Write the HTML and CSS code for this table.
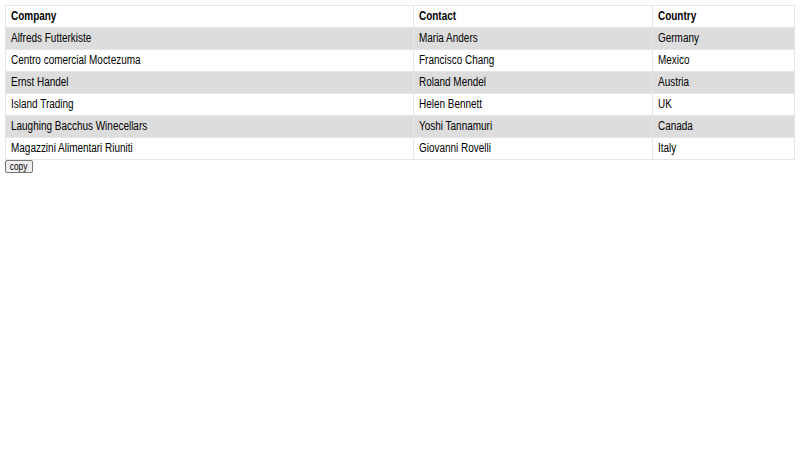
FILE: index.html
```html
<!DOCTYPE html>
<html>
<head>
<meta charset="utf-8">
<link rel="stylesheet" href="styles.css">
</head>
<body>
<table class="data">
  <colgroup><col class="c1"><col class="c2"><col class="c3"></colgroup>
  <tr><th><span>Company</span></th><th><span>Contact</span></th><th><span>Country</span></th></tr>
  <tr><td><span>Alfreds Futterkiste</span></td><td><span>Maria Anders</span></td><td><span>Germany</span></td></tr>
  <tr><td><span>Centro comercial Moctezuma</span></td><td><span>Francisco Chang</span></td><td><span>Mexico</span></td></tr>
  <tr><td><span>Ernst Handel</span></td><td><span>Roland Mendel</span></td><td><span>Austria</span></td></tr>
  <tr><td><span>Island Trading</span></td><td><span>Helen Bennett</span></td><td><span>UK</span></td></tr>
  <tr><td><span>Laughing Bacchus Winecellars</span></td><td><span>Yoshi Tannamuri</span></td><td><span>Canada</span></td></tr>
  <tr><td><span>Magazzini Alimentari Riuniti</span></td><td><span>Giovanni Rovelli</span></td><td><span>Italy</span></td></tr>
</table>
<button class="copy"><span>copy</span></button>
</body>
</html>
```
FILE: styles.css
```css
body {
  margin: 5px;
  font-family: "Liberation Sans", Arial, sans-serif;
  font-size: 12px;
  color: #000;
  background: #fff;
}
.data {
  width: 100%;
  border-collapse: collapse;
  table-layout: fixed;
}
.c1 { width: 408px; }
.c2 { width: 239px; }
.c3 { width: auto; }
.data th, .data td {
  border: 1px solid #e6e6e6;
  text-align: left;
  padding: 4px 5px;
  line-height: 13px;
  white-space: nowrap;
}
.data th span, .data td span {
  display: inline-block;
  transform: scaleX(0.83);
  transform-origin: 0 50%;
}
.data tr:nth-child(even) {
  background: #dddddd;
}
.copy {
  display: flex;
  align-items: center;
  justify-content: center;
  width: 28px;
  height: 13px;
  font-family: "Liberation Sans", Arial, sans-serif;
  font-size: 10px;
  line-height: 11px;
  padding: 0;
  margin: 0;
  border: 1px solid #767676;
  border-radius: 2px;
  background: #efefef;
  color: #000;
}
.copy span {
  display: inline-block;
  transform: scaleX(0.83);
}
```
